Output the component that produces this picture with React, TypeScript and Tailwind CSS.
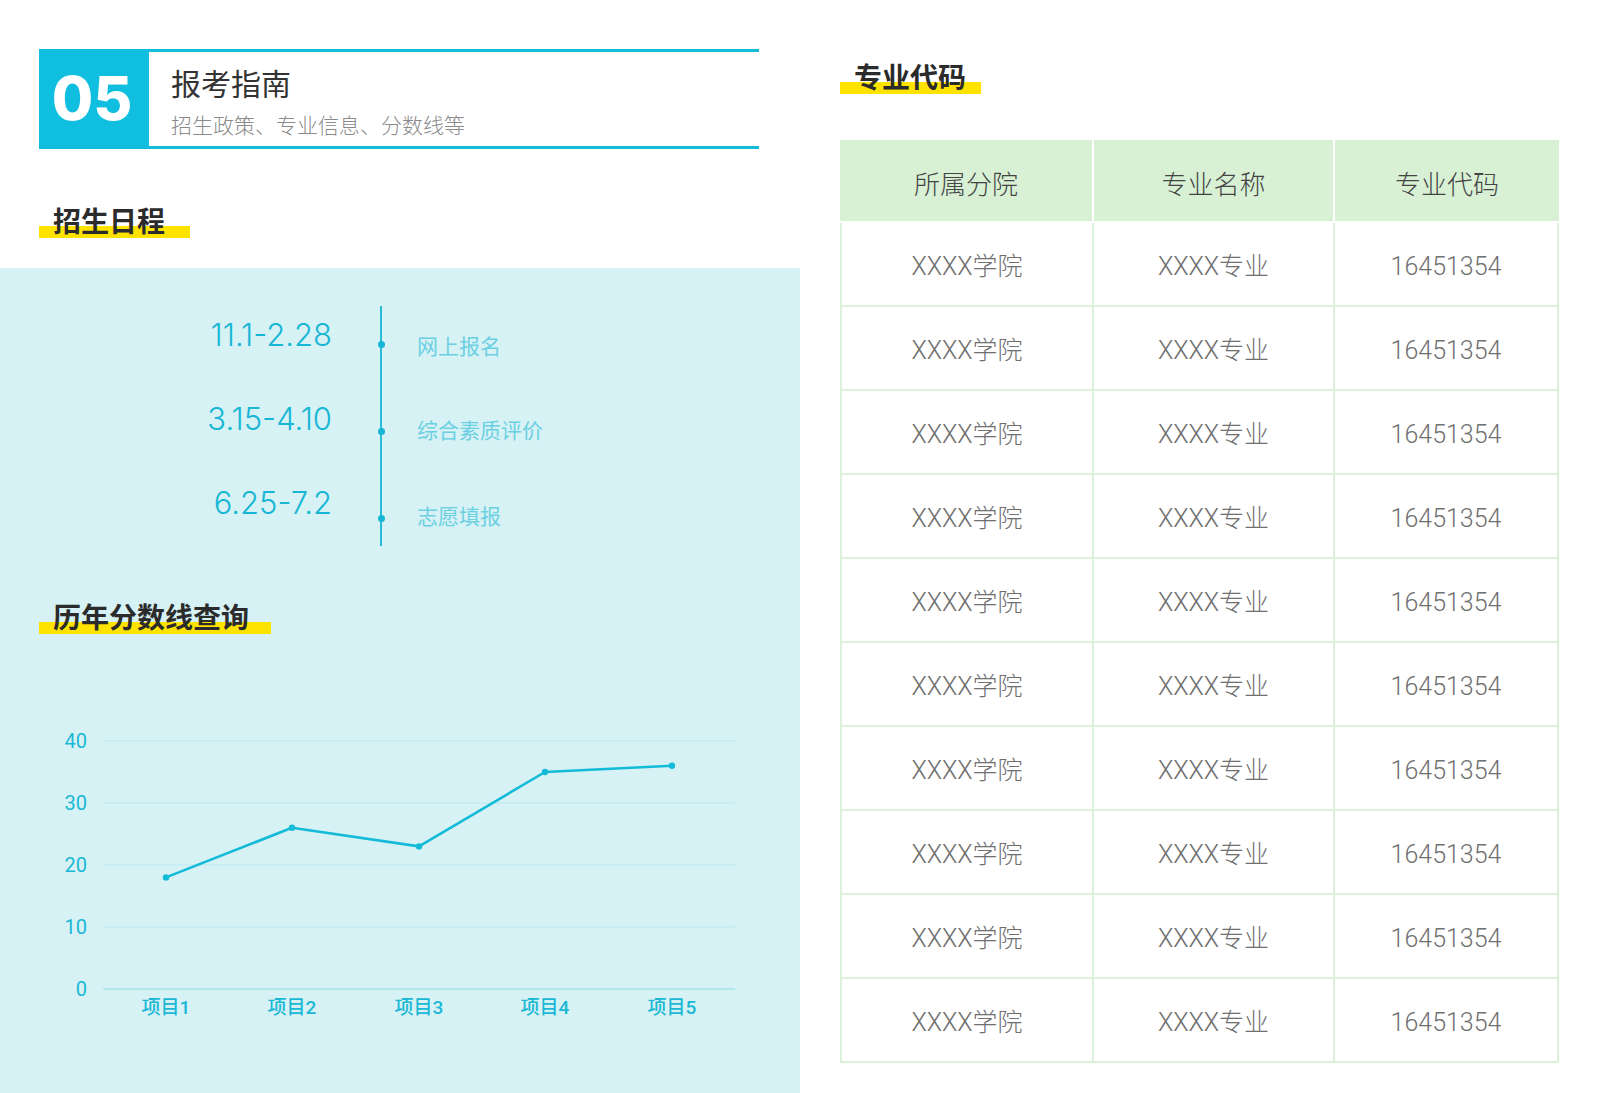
import React from 'react';

const cjk = { fontFamily: '"Noto Sans CJK SC", "Noto Sans", sans-serif' };
const latin = { fontFamily: 'Inter, "Noto Sans CJK SC", sans-serif' };
const thin = { fontFamily: 'Roboto, "Noto Sans CJK SC", sans-serif' };

// schedule items
const schedule = [
  { date: '11.1-2.28', label: '网上报名' },
  { date: '3.15-4.10', label: '综合素质评价' },
  { date: '6.25-7.2', label: '志愿填报' },
];

// score line data
const scores = [18, 26, 23, 35, 36];
const xs = [136, 262, 389, 515, 642];
const yOf = (v: number) => 289 - v * 6.2;

const rows = Array.from({ length: 10 }, () => ({
  college: 'XXXX学院',
  major: 'XXXX专业',
  code: '16451354',
}));

function Marker({ text, pr }: { text: string; pr: string }) {
  return (
    <div
      className={`inline-block h-[36px] pl-[14px] ${pr} text-[28px] font-bold leading-[36px] text-[#2b2b2b] bg-[linear-gradient(to_bottom,transparent_24px,#ffe300_24px)]`}
      style={cjk}
    >
      {text}
    </div>
  );
}

function ScoreChart() {
  const pts = scores.map((v, i) => `${xs[i]},${yOf(v)}`).join(' ');
  return (
    <svg width="740" height="330" viewBox="0 0 740 330" className="ml-[30px] block">
      {[40, 30, 20, 10, 0].map((v) => (
        <g key={v}>
          <line
            x1="73"
            x2="705"
            y1={yOf(v)}
            y2={yOf(v)}
            stroke={v === 0 ? '#8fdbe8' : '#b9e8ef'}
            strokeWidth="1"
          />
          <text
            x="57"
            y={yOf(v) + 7}
            textAnchor="end"
            fontSize="20"
            fill="#1bb8d6"
            fontFamily="Roboto, sans-serif"
          >
            {v}
          </text>
        </g>
      ))}
      <polyline points={pts} fill="none" stroke="#14bbd8" strokeWidth="2.6" strokeLinejoin="round" />
      {scores.map((v, i) => (
        <circle key={i} cx={xs[i]} cy={yOf(v)} r="3.2" fill="#14bbd8" />
      ))}
      {xs.map((x, i) => (
        <text
          key={i}
          x={x}
          y="314"
          textAnchor="middle"
          fontSize="19"
          fontWeight="500"
          fill="#1bb8d6"
          fontFamily='Roboto, "Noto Sans CJK SC", sans-serif'
        >
          项目{i + 1}
        </text>
      ))}
    </svg>
  );
}

export default function App() {
  return (
    <div className="flex w-[1600px] h-[1093px] overflow-hidden bg-white" style={cjk}>
      {/* Left column */}
      <div className="flex w-[800px] flex-col">
        <div className="pt-[49px] pl-[39px]">
          {/* Section header */}
          <div className="flex w-[720px] border-b-[3px] border-[#14bcdc]">
            <div className="flex h-[97px] w-[110px] items-center justify-center bg-[#10bedf] pr-[4px]">
              <span className="text-[60px] font-extrabold leading-none text-white" style={latin}>
                05
              </span>
            </div>
            <div className="flex-1 border-t-[3px] border-[#14bcdc] pl-[22px]">
              <div className="mt-[12px] text-[30px] leading-[36px] text-[#333]">报考指南</div>
              <div className="mt-[11px] text-[21px] leading-[26px] text-[#8a8a8a] font-light">
                招生政策、专业信息、分数线等
              </div>
            </div>
          </div>
        </div>

        <div className="mt-[53px] pl-[39px]">
          <Marker text="招生日程" pr="pr-[25px]" />
        </div>

        {/* Cyan panel */}
        <div className="mt-[30px] flex-1 bg-[#d6f2f5]">
          <div className="mt-[38px] flex h-[240px]">
            <div className="flex w-[332px] flex-col items-end gap-[44px] pt-[9px]">
              {schedule.map((s) => (
                <div key={s.date} className="text-[31px] leading-[40px] font-light text-[#18b6d5]" style={latin}>
                  {s.date}
                </div>
              ))}
            </div>
            <div className="ml-[45px] flex w-[8px] flex-col items-center gap-[80px] pt-[35px] bg-[linear-gradient(#2abbd8,#2abbd8)] bg-[length:2px_100%] bg-center bg-no-repeat">
              {schedule.map((s) => (
                <div key={s.date} className="h-[7px] w-[7px] rounded-full bg-[#18b6d5]" />
              ))}
            </div>
            <div className="ml-[32px] flex flex-col pt-[26px]">
              <div className="text-[21px] leading-[26px] text-[#6dd0e2]">网上报名</div>
              <div className="mt-[58px] text-[21px] leading-[26px] text-[#6dd0e2]">综合素质评价</div>
              <div className="mt-[60px] text-[21px] leading-[26px] text-[#6dd0e2]">志愿填报</div>
            </div>
          </div>

          <div className="mt-[52px] pl-[39px]">
            <Marker text="历年分数线查询" pr="pr-[22px]" />
          </div>

          <div className="mt-[66px]">
            <ScoreChart />
          </div>
        </div>
      </div>

      {/* Right column */}
      <div className="ml-[40px] flex flex-col">
        <div className="mt-[58px]">
          <Marker text="专业代码" pr="pr-[15px]" />
        </div>

        <div className="mt-[46px] w-[719px]">
          <div className="grid grid-cols-[252px_239px_224px] gap-x-[2px] border-b-2 border-white">
            {['所属分院', '专业名称', '专业代码'].map((h) => (
              <div
                key={h}
                className="flex h-[81px] items-center justify-center bg-[#d8f1d5] pt-[3px] text-[26px] text-[#444] font-light"
              >
                {h}
              </div>
            ))}
          </div>
          {rows.map((r, i) => (
            <div
              key={i}
              className="grid grid-cols-[252px_241px_224px] border-l-2 border-b-2 border-[#dcf1da] text-[25px] font-light text-[#707070]"
              style={thin}
            >
              <div className="flex h-[82px] items-center justify-center border-r-2 border-[#dcf1da] pt-[5px]">
                {r.college}
              </div>
              <div className="flex h-[82px] items-center justify-center border-r-2 border-[#dcf1da] pt-[5px]">
                {r.major}
              </div>
              <div className="flex h-[82px] items-center justify-center border-r-2 border-[#dcf1da] pt-[5px]">
                {r.code}
              </div>
            </div>
          ))}
        </div>
      </div>
    </div>
  );
}
